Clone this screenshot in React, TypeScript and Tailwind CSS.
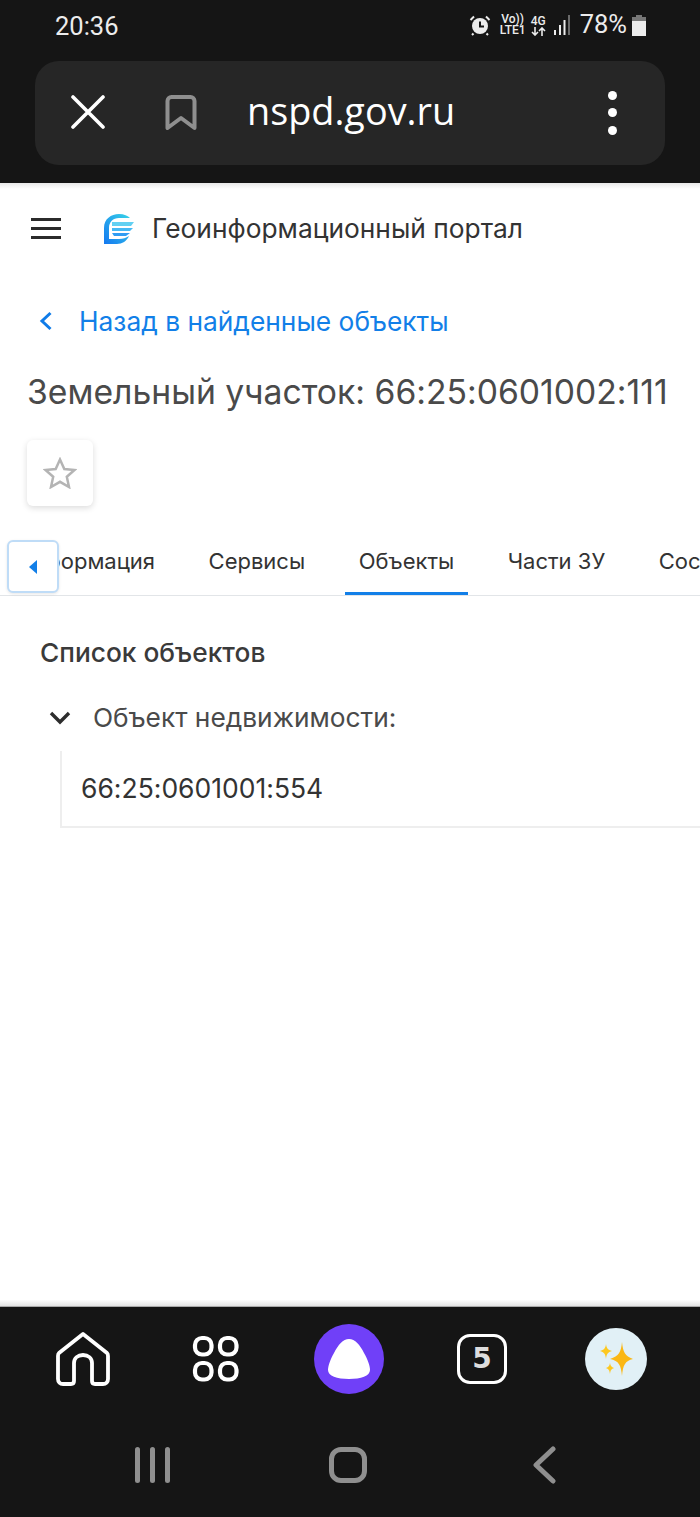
import React from 'react';

const tabs = ['Информация', 'Сервисы', 'Объекты', 'Части ЗУ', 'Состав'];

const StatusIcons = () => (
  <div className="flex items-center h-[26px] text-[#ececec]">
    {/* alarm */}
    <svg width="22" height="22" viewBox="0 0 22 22" className="mr-[9px]">
      <circle cx="11" cy="12" r="8" fill="#ececec" />
      <path d="M11 7.500V12.500H15" fill="none" stroke="#151515" strokeWidth="2" />
      <path d="M1.500 6L5 2.500M20.500 6L17 2.500M4.500 19.500L3 21M17.500 19.500L19 21" stroke="#ececec" strokeWidth="2" />
    </svg>
    <div className="flex flex-col items-center mr-[5px] font-['Roboto',sans-serif] font-medium text-[12px] leading-[11px] w-[26px]">
      <span>Vo))</span>
      <span>LTE1</span>
    </div>
    <div className="flex flex-col items-center mr-[8px] w-[15px]">
      <span className="font-['Roboto',sans-serif] font-medium text-[12px] leading-[12px]">4G</span>
      <svg width="15" height="9" viewBox="0 0 15 9">
        <path d="M4 0V8M1 5L4 8L7 5M11 9V1M8 4L11 1L14 4" fill="none" stroke="#ececec" strokeWidth="1.600" />
      </svg>
    </div>
    <svg width="16" height="20" viewBox="0 0 16 20" className="mr-[10px]">
      <rect x="0" y="15" width="2" height="5" fill="#ececec" />
      <rect x="5" y="10" width="2" height="10" fill="#ececec" />
      <rect x="9.500" y="5" width="2" height="15" fill="#ececec" />
      <rect x="14" y="0" width="2" height="20" fill="#6a6a6a" />
    </svg>
    <span className="font-['Roboto',sans-serif] text-[25.500px] leading-none mr-[5px]">78%</span>
    <svg width="14" height="21" viewBox="0 0 14 21">
      <rect x="4" y="0" width="6" height="3" fill="#777" />
      <rect x="0" y="2" width="14" height="4" fill="#777" />
      <rect x="0" y="6" width="14" height="15" fill="#ececec" />
    </svg>
  </div>
);

const BrowserHeader = () => (
  <header className="h-[183px] bg-[#151515] shrink-0 flex flex-col">
    <div className="h-[61px] pl-[55px] pr-[54px] pt-[12px] flex justify-between items-start">
      <span className="font-['Roboto',sans-serif] text-[25.500px] leading-[29px] text-[#ececec]">20:36</span>
      <StatusIcons />
    </div>
    <div className="mx-[35px] h-[104px] rounded-[24px] bg-[#262626] flex items-center">
      <svg width="34" height="34" viewBox="0 0 34 34" className="ml-[36px] mt-[-2px]">
        <path d="M2 2L32 32M32 2L2 32" stroke="#fff" strokeWidth="3.600" strokeLinecap="round" />
      </svg>
      <svg width="34" height="36" viewBox="0 0 34 36" className="ml-[59px]">
        <path d="M3 33V6C3 3.800 4.800 2 7 2H26C28.200 2 30 3.800 30 6V33L16.500 23Z" transform="translate(0.500 0)" fill="none" stroke="#8f8f8f" strokeWidth="4" strokeLinejoin="round" />
      </svg>
      <span className="ml-[49px] font-['Open_Sans',sans-serif] text-[37.800px] leading-none text-white relative top-[-2px]">nspd.gov.ru</span>
      <div className="ml-auto mr-[48px] flex flex-col gap-[8.500px] mt-[-1px]">
        <div className="w-[9px] h-[9px] rounded-full bg-white" />
        <div className="w-[9px] h-[9px] rounded-full bg-white" />
        <div className="w-[9px] h-[9px] rounded-full bg-white" />
      </div>
    </div>
  </header>
);

const Logo = () => (
  <svg width="32" height="31" viewBox="0 0 32 31">
    <defs>
      <linearGradient id="lg" x1="0" y1="1" x2="1" y2="0">
        <stop offset="0" stopColor="#1478f0" />
        <stop offset="1" stopColor="#38d4e8" />
      </linearGradient>
    </defs>
    <path d="M1 31V15C1 6 8 1 16 1C21 1 25 3 27 5H16C10 5 6 9 6 15V26H16C20 26 23 25 26 23C24 28 19 31 14 31Z" fill="url(#lg)" />
    <path d="M9 9H31L28 13H9Z" fill="#62d0f2" />
    <path d="M9 15H30L27 18H9Z" fill="#45b8f4" />
    <path d="M9 20H27L23 23H11Z" fill="#2f9cf3" />
  </svg>
);

const BottomBar = () => (
  <footer className="h-[211px] bg-[#151515] border-t border-[#aaa] shrink-0 flex flex-col">
    <div className="h-[111px] relative flex items-center">
      <svg width="56" height="56" viewBox="0 0 56 56" className="ml-[55px] mt-[-8px]">
        <path d="M28 3L52 22C53 23 53 24 53 25V48C53 51 51 53 48 53H40C38 53 37 52 37 50V32C37 27 33 24 28 24C23 24 19 27 19 32V50C19 52 18 53 16 53H8C5 53 3 51 3 48V25C3 24 3 23 4 22Z" fill="none" stroke="#fff" strokeWidth="3.800" strokeLinejoin="round" />
      </svg>
      <svg width="48" height="48" viewBox="0 0 48 48" className="ml-[81px] mt-[-8px]">
        <rect x="3" y="3" width="16.500" height="16.500" rx="7" fill="none" stroke="#fff" strokeWidth="4.200" />
        <rect x="28" y="3" width="16.500" height="16.500" rx="7" fill="none" stroke="#fff" strokeWidth="4.200" />
        <rect x="3" y="28" width="16.500" height="16.500" rx="7" fill="none" stroke="#fff" strokeWidth="4.200" />
        <rect x="28" y="28" width="16.500" height="16.500" rx="7" fill="none" stroke="#fff" strokeWidth="4.200" />
      </svg>
      <div className="ml-[74px] mt-[-8px] w-[70px] h-[70px] rounded-full bg-[#7040f8] flex items-center justify-center">
        <svg width="44" height="42" viewBox="0 0 44 42">
          <path d="M22 1C28 1 33 7 37 15C41 22 43 28 43 32C43 38 34 41 22 41C10 41 1 38 1 32C1 28 3 22 7 15C11 7 16 1 22 1Z" fill="#fff" />
        </svg>
      </div>
      <div className="ml-[73px] mt-[-8px] w-[50px] h-[50px] rounded-[13px] border-[3px] border-white flex items-center justify-center font-['DejaVu_Sans',sans-serif] font-bold text-[28px] text-[#ddd]">5</div>
      <div className="ml-[78px] mt-[-8px] w-[62px] h-[62px] rounded-full bg-[#e1f0f6] flex items-center justify-center">
        <svg width="36" height="36" viewBox="-2 -1 36 36">
          <path d="M22 0C23 10 25 14 33 17C25 19 23 23 22 34C21 23 19 19 10 17C19 14 21 10 22 0Z" fill="#fbb714" />
          <path d="M6 2C6.500 6 8 8 12 9C8 10 6.500 12 6 17C5.500 12 4 10 0 9C4 8 5.500 6 6 2Z" fill="#fdc81f" />
          <path d="M10 21C10.500 24 11.500 25 14 26C11.500 27 10.500 28 10 32C9.500 28 8.500 27 6 26C8.500 25 9.500 24 10 21Z" fill="#fdc81f" />
        </svg>
      </div>
    </div>
    <div className="flex-1 relative flex items-start pt-[29px]">
      <div className="ml-[135px] flex gap-[10px]">
        <div className="w-[5px] h-[36px] rounded-full bg-[#8f8f8f]" />
        <div className="w-[5px] h-[36px] rounded-full bg-[#8f8f8f]" />
        <div className="w-[5px] h-[36px] rounded-full bg-[#8f8f8f]" />
      </div>
      <div className="ml-[159px] w-[38px] h-[36px] rounded-[12px] border-[5px] border-[#8f8f8f]" />
      <svg width="24" height="38" viewBox="0 0 24 38" className="ml-[165px] mt-[-1px]">
        <path d="M21 3L4 19L21 35" fill="none" stroke="#8f8f8f" strokeWidth="5" strokeLinecap="round" strokeLinejoin="round" />
      </svg>
    </div>
  </footer>
);

export default function App() {
  return (
    <div className="w-[700px] h-[1517px] bg-white flex flex-col overflow-hidden font-['Inter',sans-serif] [font-feature-settings:'calt'_0]">
      <BrowserHeader />
      <main className="flex-1 min-h-0 relative overflow-hidden">
        {/* shadows under the dark bars */}
        <div className="absolute top-0 left-0 right-0 h-[6px] bg-gradient-to-b from-[#e8e8e8] to-white" />
        <div className="absolute bottom-0 left-0 right-0 h-[6px] bg-gradient-to-t from-[#e4e4e4] to-white" />

        <div className="flex items-center h-[94px] pl-[31px] pb-[3px]">
          <div className="w-[30px] flex flex-col gap-[6px]">
            <div className="h-[3px] bg-[#2b2b2b]" />
            <div className="h-[3px] bg-[#2b2b2b]" />
            <div className="h-[3px] bg-[#2b2b2b]" />
          </div>
          <div className="ml-[42px]"><Logo /></div>
          <span className="ml-[17px] text-[26.350px] leading-none text-[#333]">Геоинформационный портал</span>
        </div>

        <div className="flex items-center pl-[39px] mt-[22px] h-[44px]">
          <svg width="14" height="20" viewBox="0 0 14 20">
            <path d="M11.500 2L3 10L11.500 18" fill="none" stroke="#0f7be8" strokeWidth="3" />
          </svg>
          <span className="ml-[26px] text-[26.350px] leading-none text-[#127fe8]">Назад в найденные объекты</span>
        </div>

        <h1 className="pl-[27px] mt-[29px] text-[33.700px] leading-[40px] font-normal text-[#4a4a4a] whitespace-nowrap">Земельный участок: 66:25:0601002:111</h1>

        <div className="ml-[27px] mt-[28px] w-[66px] h-[66px] rounded-[6px] bg-white shadow-[0_2px_6px_rgba(0,0,0,0.14)] flex items-center justify-center">
          <svg width="34" height="32" viewBox="0 0 34 32">
            <path d="M17 2.500L21.300 12L31.500 13L23.800 19.800L26 30L17 24.800L8 30L10.200 19.800L2.500 13L12.700 12Z" fill="none" stroke="#b4b4b4" strokeWidth="2.500" />
          </svg>
        </div>

        <div className="relative mt-[24px] h-[66px] border-b border-[#e2e5e8]">
          <div className="flex overflow-hidden h-full pl-[2px] gap-[25.500px]">
            {tabs.map((tab) => (
              <div
                key={tab}
                className={`shrink-0 px-[14px] flex items-center text-[22px] text-[#333] border-b-[3px] ${tab === 'Объекты' ? 'border-[#127fe8]' : 'border-transparent'}`}
              >
                {tab}
              </div>
            ))}
          </div>
          <div className="absolute left-[7px] top-[10px] w-[52px] h-[53px] rounded-[6px] bg-white border-2 border-[#bfdcf7] shadow-[0_1px_3px_rgba(0,0,0,0.1)] flex items-center justify-center">
            <svg width="10" height="14" viewBox="0 0 10 14">
              <path d="M9 0V14L1 7Z" fill="#127fe8" />
            </svg>
          </div>
        </div>

        <h2 className="pl-[40px] mt-[41px] text-[26.300px] leading-[32px] font-medium text-[#3a3a3a]">Список объектов</h2>

        <div className="flex items-center pl-[49px] mt-[31px] h-[36px]">
          <svg width="22" height="14" viewBox="0 0 22 14">
            <path d="M2 2L11 11L20 2" fill="none" stroke="#2d2d2d" strokeWidth="3.400" />
          </svg>
          <span className="ml-[22px] text-[26.300px] leading-none text-[#4a4a4a]">Объект недвижимости:</span>
        </div>

        <div className="ml-[60px] mt-[15px] h-[77px] border-l-2 border-b-2 border-[#eeeeee] flex items-center pl-[19px]">
          <span className="text-[26.500px] leading-none text-[#333]">66:25:0601001:554</span>
        </div>
      </main>
      <BottomBar />
    </div>
  );
}
